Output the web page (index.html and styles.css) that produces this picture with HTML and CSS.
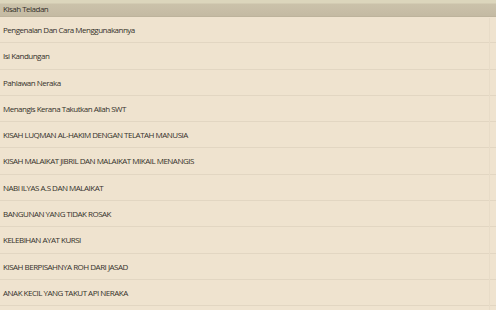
FILE: index.html
```html
<!DOCTYPE html>
<html>
<head>
<meta charset="utf-8">
<link rel="stylesheet" href="styles.css">
</head>
<body>
<div class="app">
  <div class="titlebar">Kisah Teladan</div>
  <ul class="list">
    <li class="item">Pengenalan Dan Cara Menggunakannya</li>
    <li class="item">Isi Kandungan</li>
    <li class="item">Pahlawan Neraka</li>
    <li class="item">Menangis Kerana Takutkan Allah SWT</li>
    <li class="item">KISAH LUQMAN AL-HAKIM DENGAN TELATAH MANUSIA</li>
    <li class="item">KISAH MALAIKAT JIBRIL DAN MALAIKAT MIKAIL MENANGIS</li>
    <li class="item">NABI ILYAS A.S DAN MALAIKAT</li>
    <li class="item">BANGUNAN YANG TIDAK ROSAK</li>
    <li class="item">KELEBIHAN AYAT KURSI</li>
    <li class="item">KISAH BERPISAHNYA ROH DARI JASAD</li>
    <li class="item">ANAK KECIL YANG TAKUT API NERAKA</li>
  </ul>
  <div class="scrolltrack"></div>
</div>
</body>
</html>
```

FILE: styles.css
```css
html, body {
  margin: 0;
  padding: 0;
  background: #efe3cf;
}
.app {
  position: relative;
  width: 496px;
  height: 310px;
  overflow: hidden;
  background: #efe3cf;
  font-family: "Open Sans", "Noto Sans", sans-serif;
  letter-spacing: -0.5px;
  color: #35312b;
}
.titlebar {
  height: 17px;
  box-sizing: border-box;
  padding-left: 3px;
  font-size: 8px;
  line-height: 18px;
  background: linear-gradient(#dcd6bc 0, #dcd6bc 3px, #cbc2aa 4px, #c4baa3 100%);
  border-bottom: 1px solid #bdb39c;
}
.list {
  list-style: none;
  margin: 0;
  padding: 0;
}
.item {
  height: 26.3px;
  box-sizing: border-box;
  padding-left: 3px;
  font-size: 8px;
  line-height: 26px;
  border-bottom: 1px solid #e2d6c2;
  white-space: nowrap;
}
.scrolltrack {
  position: absolute;
  top: 18px;
  right: 6px;
  width: 1px;
  height: 292px;
  background: #e8dcc8;
}
```
